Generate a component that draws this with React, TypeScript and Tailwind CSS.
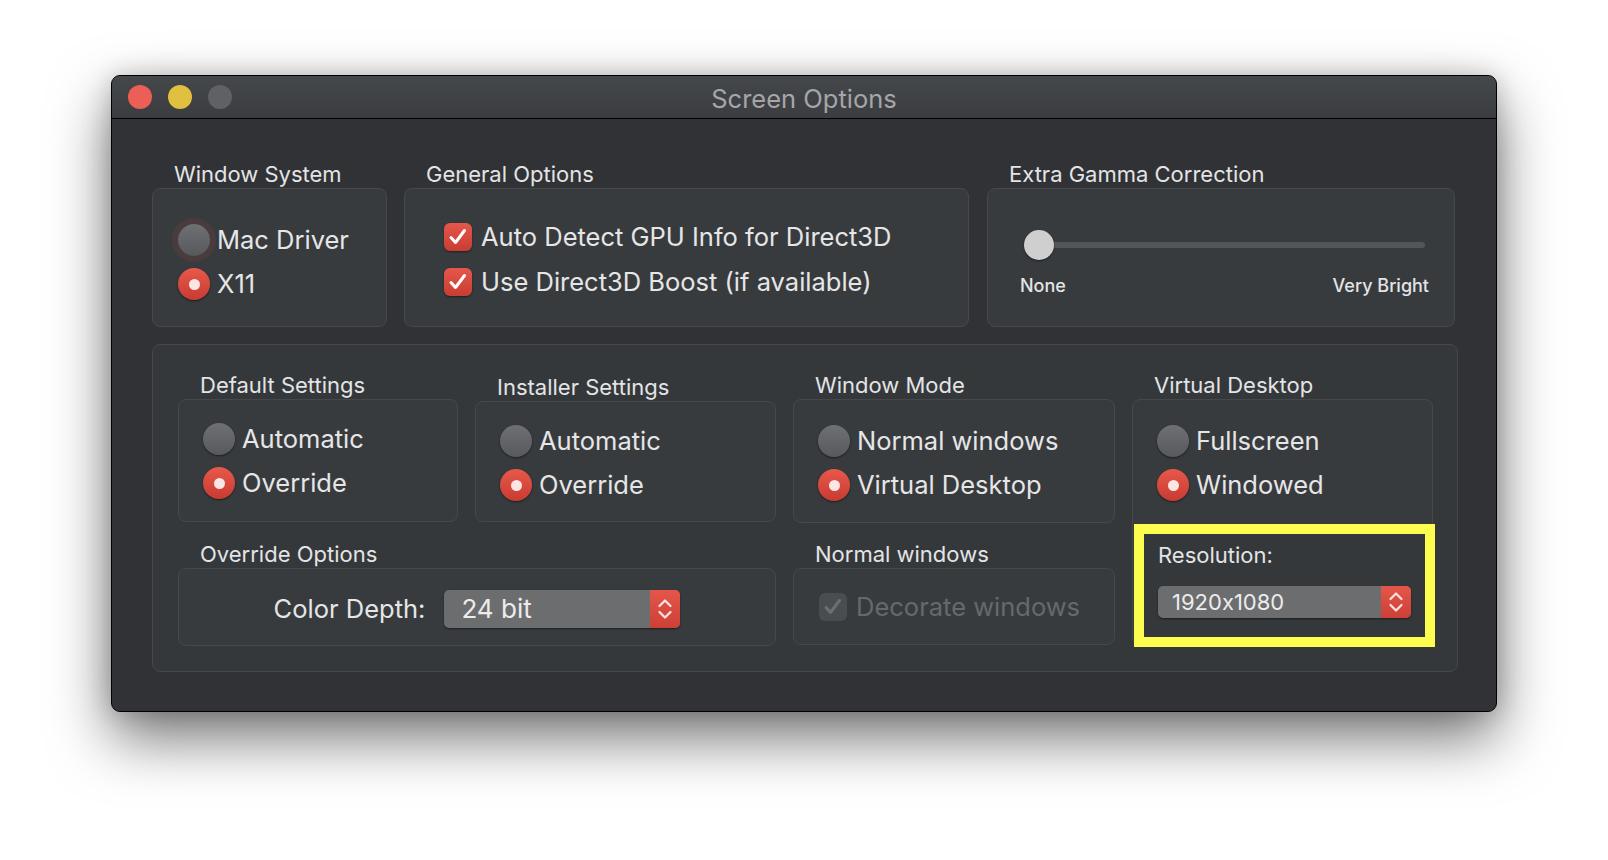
import { ReactNode } from 'react';

const Radio = ({ on, focus, label }: { on?: boolean; focus?: boolean; label: string }) => (
  <div className="flex h-[32px] items-center gap-[7px]">
    <span className={`flex h-[32px] w-[32px] shrink-0 items-center justify-center rounded-full shadow-[0_1px_2px_rgba(0,0,0,0.55)] ${on ? 'bg-gradient-to-b from-[#e8584b] to-[#c83b31]' : 'bg-gradient-to-b from-[#6e7073] to-[#57595c]'} ${focus ? 'ring-[6px] ring-[#4a3c3d]' : ''}`}>
      {on && <span className="h-[11px] w-[11px] rounded-full bg-[#fbe6e4]" />}
    </span>
    <span className="text-[25.5px] leading-none text-[#e6e6e7]">{label}</span>
  </div>
);

const Check = ({ label, disabled }: { label: string; disabled?: boolean }) => (
  <div className="flex h-[28px] items-center gap-[9px]">
    <span className={`flex h-[28px] w-[28px] shrink-0 items-center justify-center rounded-[6px] ${disabled ? 'bg-[#4a4d50]' : 'bg-gradient-to-b from-[#e6574b] to-[#c83c32] shadow-[0_1px_2px_rgba(0,0,0,0.5)]'}`}>
      <svg width="28" height="28" viewBox="0 0 28 28" fill="none">
        <path d="M7 14.5l4.5 5L20.5 7.5" stroke={disabled ? '#6c6f72' : '#ffffff'} strokeWidth="3" strokeLinecap="round" strokeLinejoin="round" />
      </svg>
    </span>
    <span className={`text-[25.5px] leading-none ${disabled ? 'text-[#66696c]' : 'text-[#e6e6e7]'}`}>{label}</span>
  </div>
);

const Popup = ({ value, className, textClass }: { value: string; className: string; textClass: string }) => (
  <div className={`flex overflow-hidden rounded-[5px] bg-[#6c6d6f] shadow-[0_1px_2px_rgba(0,0,0,0.5)] ${className}`}>
    <span className={`flex flex-1 items-center leading-none text-[#ececec] [font-variant-ligatures:no-contextual] ${textClass}`}>{value}</span>
    <span className="flex h-full w-[30px] items-center justify-center bg-gradient-to-b from-[#e5554a] to-[#cc4035]">
      <svg width="16" height="26" viewBox="0 0 16 26" fill="none">
        <path d="M2.5 10l5.5-5.5L13.5 10M2.5 16l5.5 5.5 5.5-5.5" stroke="#fbe3e0" strokeWidth="2.2" strokeLinecap="round" strokeLinejoin="round" />
      </svg>
    </span>
  </div>
);

const Group = ({ title, className = '', boxClass = '', children }: { title: string; className?: string; boxClass?: string; children: ReactNode }) => (
  <div className={`flex flex-col ${className}`}>
    <div className="mb-[2px] pl-[22px] text-[22px] leading-[24px] text-[#e3e4e5]">{title}</div>
    <div className={`rounded-[8px] border border-[#46494c] bg-[#383b3e] ${boxClass}`}>{children}</div>
  </div>
);

export default function App() {
  return (
    <div className="min-h-screen bg-white pl-[111px] pt-[75px] font-['Inter','Noto_Sans',sans-serif]">
      <div className="flex h-[637px] w-[1386px] flex-col overflow-hidden rounded-[9px] border border-black bg-[#303235] shadow-[0_26px_60px_rgba(0,0,0,0.55),0_0_24px_rgba(0,0,0,0.18)]">
        {/* title bar */}
        <div className="grid h-[43px] shrink-0 grid-cols-[1fr_auto_1fr] items-center border-b border-black bg-gradient-to-b from-[#45484b] to-[#3a3c3f]">
          <div className="flex gap-[16px] pl-[16px]">
            <span className="h-[24px] w-[24px] rounded-full bg-[#ec5f56]" />
            <span className="h-[24px] w-[24px] rounded-full bg-[#e0bf41]" />
            <span className="h-[24px] w-[24px] rounded-full bg-[#5f6164]" />
          </div>
          <div className="pt-[3px] text-[25.5px] leading-none text-[#a4a6a9]">Screen Options</div>
          <div />
        </div>

        <div className="flex flex-col pl-[40px] pt-[43px]">
          {/* top row */}
          <div className="flex">
            <Group title="Window System" className="w-[235px]" boxClass="flex h-[139px] flex-col gap-[12px] pl-[25px] pt-[35px]">
              <Radio focus label="Mac Driver" />
              <Radio on label="X11" />
            </Group>
            <Group title="General Options" className="ml-[17px] w-[565px]" boxClass="flex h-[139px] flex-col gap-[17px] pl-[39px] pt-[34px]">
              <Check label="Auto Detect GPU Info for Direct3D" />
              <Check label="Use Direct3D Boost (if available)" />
            </Group>
            <Group title="Extra Gamma Correction" className="ml-[18px] w-[468px]" boxClass="flex h-[139px] flex-col pl-[32px] pr-[25px] pt-[41px]">
              <div className="relative ml-[4px] mr-[4px] h-[30px]">
                <div className="absolute left-[15px] right-0 top-[12px] h-[6px] rounded-full bg-[#52565a]" />
                <div className="absolute left-0 top-0 h-[30px] w-[30px] rounded-full bg-[#cfcfcf] shadow-[0_1px_2px_rgba(0,0,0,0.5)]" />
              </div>
              <div className="mt-[17px] flex justify-between text-[18px] font-medium leading-none text-[#e3e4e5]">
                <span>None</span>
                <span>Very Bright</span>
              </div>
            </Group>
          </div>

          {/* bottom panel */}
          <div className="mt-[17px] w-[1306px] rounded-[8px] border border-[#46494c] bg-[#35383b] pb-[25px] pl-[25px] pt-[28px]">
            <div className="grid grid-cols-[280px_301px_322px_301px] gap-x-[17px] gap-y-[19px]">
              <Group title="Default Settings" boxClass="flex h-[123px] flex-col gap-[12px] pl-[24px] pt-[23px]">
                <Radio label="Automatic" />
                <Radio on label="Override" />
              </Group>
              <Group title="Installer Settings" className="pt-[2px]" boxClass="flex h-[121px] flex-col gap-[12px] pl-[24px] pt-[23px]">
                <Radio label="Automatic" />
                <Radio on label="Override" />
              </Group>
              <Group title="Window Mode" boxClass="flex h-[124px] flex-col gap-[12px] pl-[24px] pt-[25px]">
                <Radio label="Normal windows" />
                <Radio on label="Virtual Desktop" />
              </Group>
              <Group title="Virtual Desktop" className="row-span-2" boxClass="flex flex-1 flex-col pt-[25px]">
                <div className="flex flex-col gap-[12px] pl-[24px]">
                  <Radio label="Fullscreen" />
                  <Radio on label="Windowed" />
                </div>
                <div className="-mb-[2px] -mr-[3px] ml-[1px] mt-auto flex h-[123px] flex-col border-[10px] border-[#fdfd50] bg-[#35383b] px-[14px] pt-[9px]">
                  <div className="text-[22px] leading-[24px] text-[#e3e4e5]">Resolution:</div>
                  <Popup value="1920x1080" className="mt-[19px] h-[32px]" textClass="pl-[14px] text-[22px]" />
                </div>
              </Group>
              <Group title="Override Options" className="col-span-2" boxClass="flex h-[78px] items-center justify-center gap-[19px] pt-[4px]">
                <span className="text-[25.5px] leading-none text-[#e6e6e7]">Color Depth:</span>
                <Popup value="24 bit" className="h-[38px] w-[236px]" textClass="pl-[17px] text-[26px]" />
              </Group>
              <Group title="Normal windows" boxClass="flex h-[77px] items-center pl-[25px]">
                <Check disabled label="Decorate windows" />
              </Group>
            </div>
          </div>
        </div>
      </div>
    </div>
  );
}
